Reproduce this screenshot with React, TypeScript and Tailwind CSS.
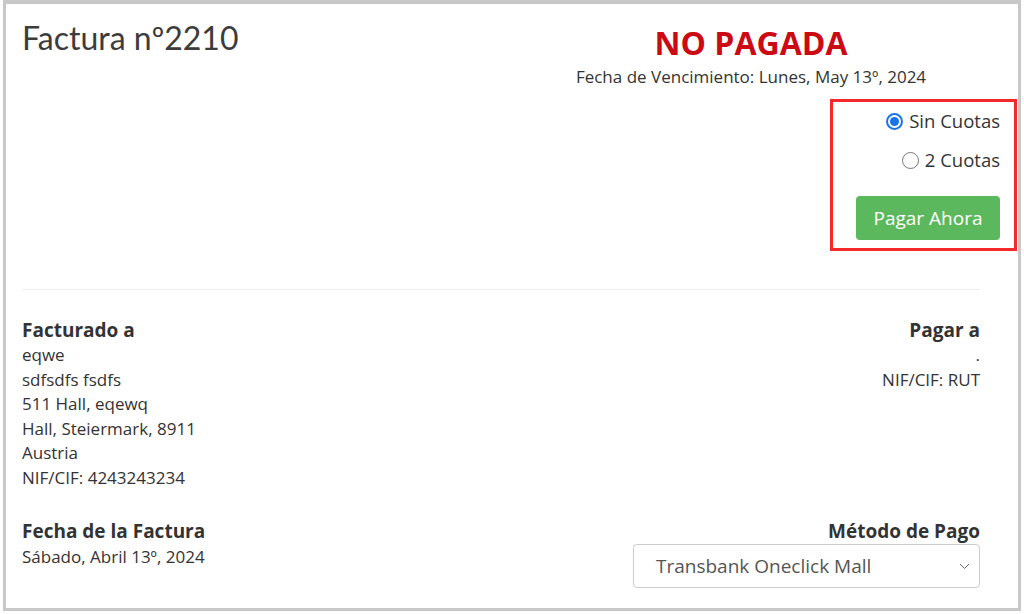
import { useState } from 'react';

const body = { fontFamily: '"Open Sans", "Liberation Sans", sans-serif' };

function Radio({ checked, label, onClick }: { checked: boolean; label: string; onClick: () => void }) {
  return (
    <button className="flex h-[28px] items-center gap-[6px] text-[18.5px] text-[#333]" onClick={onClick}>
      {checked ? (
        <span className="flex h-[17px] w-[17px] items-center justify-center rounded-full border-[2px] border-[#1a73e8] bg-white">
          <span className="h-[9px] w-[9px] rounded-full bg-[#1a73e8]" />
        </span>
      ) : (
        <span className="h-[17px] w-[17px] rounded-full border border-[#767676] bg-white" />
      )}
      <span>{label}</span>
    </button>
  );
}

export default function App() {
  const [cuotas, setCuotas] = useState<'sin' | '2'>('sin');

  return (
    <div className="h-[614px] w-[1024px] bg-white pl-[3px]" style={body}>
      <div className="h-[611px] w-[1018px] border-[3px] border-t-4 border-[#c8c8c8] bg-white pl-4 text-[#333]">
        {/* cabecera */}
        <div className="flex justify-between">
          <h1
            className="mt-[14px] text-[32px] leading-[40px] font-normal text-[#3c3c3c]"
            style={{ fontFamily: 'Lato, "Open Sans", sans-serif' }}
          >
            Factura nº2210
          </h1>

          <div className="relative mr-[18px] w-[498px]">
            <p className="mt-[19px] text-center text-[32px] leading-[40px] font-bold text-[#cc0a14]">NO PAGADA</p>
            <p className="mt-[2px] text-center text-[17px] leading-[24px] text-[#333]">
              Fecha de Vencimiento: Lunes, May 13º, 2024
            </p>

            <div className="mt-[18px] flex flex-col items-end gap-[11px]">
              <Radio checked={cuotas === 'sin'} label="Sin Cuotas" onClick={() => setCuotas('sin')} />
              <Radio checked={cuotas === '2'} label="2 Cuotas" onClick={() => setCuotas('2')} />
            </div>

            <div className="mt-[22px] flex justify-end">
              <button className="h-[44px] w-[144px] rounded-[4px] bg-[#5cb85c] text-[19px] text-white hover:bg-[#4cae4c]">
                Pagar Ahora
              </button>
            </div>

            {/* marca de la captura */}
            <div className="absolute top-[95px] right-[-17px] h-[152px] w-[187px] border-[3px] border-[#f5292a]" />
          </div>
        </div>

        {/* datos */}
        <div className="mr-[38px] mt-[49px] border-t border-[#eeeeee] pt-[27px]">
          <div className="flex justify-between">
            <div>
              <h2 className="text-[19px] leading-[26px] font-bold">Facturado a</h2>
              <div className="text-[17px] leading-[24.5px]">
                <p>eqwe</p>
                <p>sdfsdfs fsdfs</p>
                <p>511 Hall, eqewq</p>
                <p>Hall, Steiermark, 8911</p>
                <p>Austria</p>
                <p>NIF/CIF: 4243243234</p>
              </div>
            </div>
            <div className="text-right">
              <h2 className="text-[19px] leading-[26px] font-bold">Pagar a</h2>
              <div className="text-[17px] leading-[24.5px]">
                <p>.</p>
                <p>NIF/CIF: RUT</p>
              </div>
            </div>
          </div>

          <div className="mt-[28px] flex justify-between">
            <div>
              <h2 className="text-[19px] leading-[26px] font-bold">Fecha de la Factura</h2>
              <p className="mt-[1px] text-[17px] leading-[24.5px]">Sábado, Abril 13º, 2024</p>
            </div>
            <div className="flex flex-col items-end">
              <h2 className="text-[19px] leading-[26px] font-bold">Método de Pago</h2>
              <div className="relative flex h-[44px] w-[347px] items-center rounded-[4px] border border-[#cccccc] bg-white pl-[22px] text-[19px] text-[#555]">
                Transbank Oneclick Mall
                <svg className="absolute right-[9px] top-[18px]" width="11" height="7" viewBox="0 0 11 7" fill="none">
                  <path d="M1 1l4.5 4.5L10 1" stroke="#666" strokeWidth="1" />
                </svg>
              </div>
            </div>
          </div>
        </div>
      </div>
    </div>
  );
}
